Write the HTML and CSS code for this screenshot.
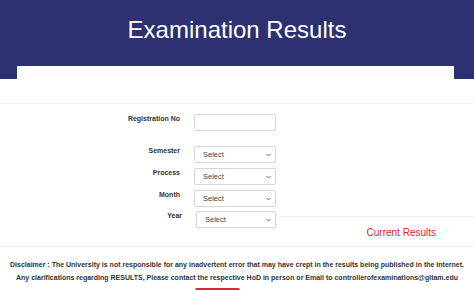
FILE: index.html
```html
<!DOCTYPE html>
<html lang="en">
<head>
<meta charset="utf-8">
<title>Examination Results</title>
<link rel="stylesheet" href="styles.css">
</head>
<body>
<header class="banner">
  <h1 class="banner-title">Examination Results</h1>
  <div class="banner-card"></div>
</header>
<main class="content">
  <form class="form">
    <div class="row row-reg">
      <label class="label">Registration No</label>
      <div class="input"></div>
    </div>
    <div class="row">
      <label class="label">Semester</label>
      <div class="select"><span>Select</span><svg class="chev" viewBox="0 0 6 4" width="5" height="4"><path d="M0.6 0.8 L3 3.2 L5.4 0.8" fill="none" stroke="#666" stroke-width="1"/></svg></div>
    </div>
    <div class="row">
      <label class="label">Process</label>
      <div class="select"><span>Select</span><svg class="chev" viewBox="0 0 6 4" width="5" height="4"><path d="M0.6 0.8 L3 3.2 L5.4 0.8" fill="none" stroke="#666" stroke-width="1"/></svg></div>
    </div>
    <div class="row">
      <label class="label">Month</label>
      <div class="select"><span>Select</span><svg class="chev" viewBox="0 0 6 4" width="5" height="4"><path d="M0.6 0.8 L3 3.2 L5.4 0.8" fill="none" stroke="#666" stroke-width="1"/></svg></div>
    </div>
    <div class="row row-year">
      <label class="label">Year</label>
      <div class="select select-year"><span>Select</span><svg class="chev" viewBox="0 0 6 4" width="5" height="4"><path d="M0.6 0.8 L3 3.2 L5.4 0.8" fill="none" stroke="#666" stroke-width="1"/></svg></div>
      <div class="rule"></div>
    </div>
  </form>
  <div class="current"><span class="current-link">Current Results</span></div>
  <section class="disclaimer">
    <p>Disclaimer : The University is not responsible for any inadvertent error that may have crept in the results being published in the internet.</p>
    <p>Any clarifications regarding RESULTS, Please contact the respective HoD in person or Email to controllerofexaminations@gitam.edu</p>
  </section>
  <div class="actions"><span class="btn"></span></div>
</main>
</body>
</html>
```

FILE: styles.css
```css
html, body {
  margin: 0;
  padding: 0;
  background: #fff;
  font-family: "Liberation Sans", Arial, sans-serif;
  overflow: hidden;
}

.banner {
  height: 79px;
  background: #2d3170;
  display: flex;
  flex-direction: column;
}

.banner-title {
  margin: 0;
  padding-top: 18px;
  font-size: 24px;
  line-height: 24px;
  font-weight: normal;
  color: #fff;
  text-align: center;
  flex: 1;
}

.banner-card {
  height: 13px;
  margin-left: 17px;
  margin-right: 20px;
  background: #fff;
}

.content {
  margin-top: 24px;
  border-top: 1px solid #efefef;
}

.form {
  padding-top: 10px;
  display: flex;
  flex-direction: column;
  gap: 5px;
}

.row {
  display: flex;
  align-items: flex-start;
  gap: 14px;
}

.row-reg {
  margin-bottom: 10px;
}

.label {
  width: 180px;
  text-align: right;
  font-size: 7px;
  line-height: 10px;
  font-weight: bold;
  color: #333;
}

.input {
  width: 80px;
  height: 15px;
  border: 1px solid #d6d6d6;
  border-radius: 2px;
}

.select {
  height: 15px;
  border: 1px solid #d6d6d6;
  border-radius: 2px;
  display: flex;
  align-items: center;
  justify-content: space-between;
  padding: 0 4px 0 8px;
  box-sizing: content-box;
  width: 68px;
  font-size: 7.5px;
  color: #444;
}

.row-year {
  margin-top: -1px;
}

.row-year .label {
  width: 182px;
}

.select-year {
  width: 66px;
}

.rule {
  flex: 1;
  margin-top: 5px;
  margin-left: -11px;
  border-top: 1px solid #eeeeee;
}

.current {
  margin-top: -3px;
  padding-right: 38px;
  padding-bottom: 7px;
  text-align: right;
  line-height: 12px;
  border-bottom: 1px solid #efefef;
}

.current-link {
  font-size: 10px;
  color: #e3222b;
}

.disclaimer {
  padding-top: 11px;
}

.disclaimer p {
  margin: 0;
  text-align: center;
  font-size: 7px;
  line-height: 13px;
  font-weight: bold;
  color: #333;
}

.actions {
  margin-top: 4px;
  padding-left: 195px;
}

.btn {
  display: block;
  width: 45px;
  height: 20px;
  background: #d8292f;
  border-radius: 2px;
}
```
